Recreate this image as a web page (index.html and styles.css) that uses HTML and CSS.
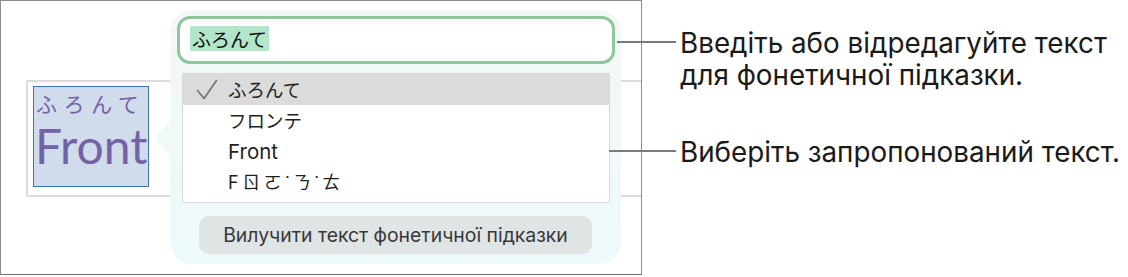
FILE: index.html
```html
<!DOCTYPE html>
<html lang="uk">
<head>
  <meta charset="UTF-8" />
  <meta name="viewport" content="width=device-width, initial-scale=1.0" />
  <title>Фонетична підказка</title>
  <link rel="stylesheet" href="styles.css">
</head>
<body>
  <div class="page">
    <div class="frame">
      <div class="doc-box">
        <div class="ruby-sel">
          <div class="ruby">ふろんて</div>
          <div class="base">Front</div>
        </div>
      </div>

      <div class="popover">
        <div class="field">
          <span class="field-text">ふろんて</span>
        </div>
        <ul class="choices">
          <li class="choice selected">
            <svg class="check" width="22" height="22" viewBox="0 0 22 22">
              <path d="M1.5 11.5 L8 19.5 L20.5 1.5" fill="none" stroke="#6e6e6e" stroke-width="1.5" stroke-linecap="round" stroke-linejoin="round"/>
            </svg>
            <span class="kana">ふろんて</span>
          </li>
          <li class="choice"><span class="kana">フロンテ</span></li>
          <li class="choice">Front</li>
          <li class="choice bopo">Fㄖㄛ˙ㄋ˙ㄊ</li>
        </ul>
        <button class="remove-btn">Вилучити текст фонетичної підказки</button>
      </div>
    </div>

    <div class="notes">
      <p class="note note-top">Введіть або відредагуйте текст<br>для фонетичної підказки.</p>
      <p class="note note-mid">Виберіть запропонований текст.</p>
    </div>
  </div>
</body>
</html>
```

FILE: styles.css
```css
body {
  margin: 0;
  padding: 0;
  background: #ffffff;
  font-family: 'Inter', 'Noto Sans CJK JP', sans-serif;
  color: #1c1c1c;
}
.page {
  display: flex;
  width: 1128px;
  height: 277px;
}
.frame {
  position: relative;
  box-sizing: border-box;
  width: 642px;
  height: 275px;
  border: 1px solid #8c8c8c;
  border-bottom-color: #6f6f6f;
  overflow: hidden;
  flex-shrink: 0;
}

/* document text object */
.doc-box {
  box-sizing: border-box;
  margin: 79px 0 0 25px;
  height: 117px;
  border: 2px solid #dcdcdc;
  border-right: none;
  padding: 4px 0 0 5px;
}
.ruby-sel {
  box-sizing: border-box;
  width: 116px;
  height: 101px;
  background: #d0dcec;
  border: 1.5px solid #3d72b8;
  overflow: hidden;
  color: #7462a6;
  font-family: 'Lato', 'Noto Sans CJK JP', sans-serif;
}
.ruby {
  font-family: 'Noto Sans CJK JP', sans-serif;
  font-size: 21px;
  letter-spacing: 6.6px;
  line-height: 26px;
  margin: 3px 0 0 2px;
}
.base {
  font-size: 48px;
  line-height: 56px;
  margin: 2px 0 0 1px;
  white-space: nowrap;
}

/* popover */
.popover {
  position: absolute;
  left: 169px;
  top: 9px;
  box-sizing: border-box;
  width: 451px;
  height: 254px;
  padding: 6px 6px 0 7px;
  border-radius: 22px;
  background: linear-gradient(to bottom, #f3f8f7, #eef9fb);
}
.popover::before {
  content: "";
  position: absolute;
  left: -11px;
  top: 115px;
  width: 26px;
  height: 26px;
  background: #f1f8f8;
  border-radius: 6px;
  transform: rotate(45deg);
}
.field {
  position: relative;
  box-sizing: border-box;
  height: 48px;
  border: 3.5px solid #8fc79a;
  border-radius: 13px;
  background: #ffffff;
  padding: 7px 0 0 10px;
}
.field-text {
  display: inline-block;
  background: #b3e5cb;
  font-family: 'Noto Sans CJK JP', sans-serif;
  font-size: 19px;
  line-height: 25px;
  padding: 0 2px;
  color: #111;
}
.choices {
  position: relative;
  list-style: none;
  box-sizing: border-box;
  margin: 9px 0 0 5px;
  padding: 0 0 5px 0;
  width: 428px;
  height: 130px;
  border: 1px solid #dadada;
  background: #ffffff;
}
.choice {
  position: relative;
  height: 31px;
  line-height: 31px;
  padding-left: 45px;
  font-size: 20.5px;
  color: #1f1f1f;
}
.choice .kana {
  font-family: 'Noto Sans CJK JP', sans-serif;
  font-size: 18.5px;
}
.choice.selected {
  background: #dbdbdb;
}
.check {
  position: absolute;
  left: 13px;
  top: 5px;
}
.bopo {
  font-family: 'Inter', 'Noto Sans CJK TC', sans-serif;
  letter-spacing: 3.5px;
  font-size: 18px;
}
.remove-btn {
  display: block;
  margin: 13px 0 0 22px;
  width: 393px;
  height: 38px;
  border: none;
  border-radius: 10px;
  background: #dfe4e5;
  font-family: 'Inter', sans-serif;
  font-size: 19.4px;
  color: #383838;
  padding: 0;
  cursor: pointer;
}

/* callouts */
.notes {
  padding: 27px 0 0 38px;
}
.note {
  position: relative;
  margin: 0;
  font-size: 27.8px;
  line-height: 32px;
  color: #1a1a1a;
  white-space: nowrap;
}
.note::before {
  content: "";
  position: absolute;
  top: 14px;
  height: 1.5px;
  background: #7a7a7a;
}
.note-top::before {
  left: -63px;
  width: 59px;
}
.note-mid {
  margin-top: 45px;
}
.note-mid::before {
  left: -71px;
  width: 67px;
}
```
